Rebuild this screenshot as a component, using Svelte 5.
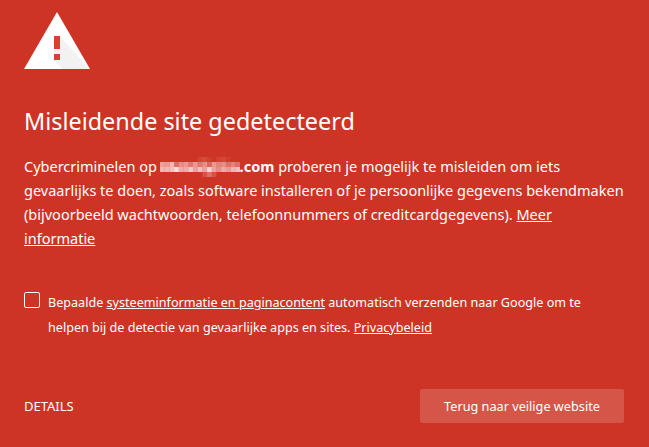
<script>
  // mosaic over the masked domain name, one row of opacities per 5px block
  const mosaic = [
    [0, 0, 0, 0, 0, 0, 0, 0, 0.08, 0.12, 0.06, 0, 0.08, 0.1, 0.04, 0, 0],
    [0.55, 0.5, 0.65, 0.3, 0.45, 0.5, 0.35, 0.5, 0.35, 0.45, 0.25, 0.5, 0.4, 0.45, 0.3, 0.4, 0.3],
    [0.65, 0.65, 0.7, 0.85, 0.6, 0.6, 0.75, 0.55, 0.7, 0.55, 0.8, 0.55, 0.45, 0.6, 0.5, 0.65, 0.7],
    [0, 0, 0, 0, 0, 0, 0, 0, 0, 0.15, 0.3, 0.15, 0, 0, 0, 0, 0],
  ];
</script>

<main>
  <svg class="icon" width="66" height="58" viewBox="0 0 66 58">
    <polygon points="33,0 66,57 0,57" fill="#fff" />
    <polygon points="60,57 38,57 30,49 30,24 36,24 59,50 64,57" fill="#000" opacity="0.05" />
    <rect x="30" y="24" width="6" height="13" fill="#d93f32" />
    <rect x="30" y="42" width="6" height="6" fill="#d93f32" />
  </svg>

  <h1>Misleidende site gedetecteerd</h1>

  <p class="intro">
    Cybercriminelen op
    <svg class="mask" width="80" height="20" viewBox="0 0 85 20" preserveAspectRatio="none">
      {#each mosaic as row, y}
        {#each row as o, x}
          <rect x={x * 5} y={y * 5} width="5" height="5" fill="#fff" opacity={o} />
        {/each}
      {/each}
    </svg><strong>.com</strong> proberen je mogelijk te misleiden om iets
    gevaarlijks te doen, zoals software installeren of je persoonlijke gegevens bekendmaken
    (bijvoorbeeld wachtwoorden, telefoonnummers of creditcardgegevens). <a href="#meer">Meer informatie</a>
  </p>

  <label class="optin">
    <span class="box"></span>
    <span class="optin-text">
      Bepaalde <a href="#info">systeeminformatie en paginacontent</a> automatisch verzenden naar Google om te
      helpen bij de detectie van gevaarlijke apps en sites. <a href="#privacy">Privacybeleid</a>
    </span>
  </label>

  <footer>
    <button class="details">DETAILS</button>
    <button class="back">Terug naar veilige website</button>
  </footer>
</main>

<style>
  :global(body) {
    background: #ce3426;
  }

  main {
    height: 447px;
    box-sizing: border-box;
    padding: 12px 25px 0 24px;
    display: flex;
    flex-direction: column;
    color: #fff;
    font-family: "Noto Sans", "Open Sans", sans-serif;
    overflow: hidden;
  }

  .icon {
    display: block;
    flex: none;
  }

  h1 {
    margin: 36px 0 0;
    font-size: 23.4px;
    line-height: 30px;
    font-weight: 400;
  }

  .intro {
    margin: 18px 0 0;
    font-size: 14.5px;
    line-height: 24px;
  }

  .mask {
    vertical-align: -5px;
    margin-left: -1px;
  }

  a {
    color: #fff;
    text-decoration: underline;
  }

  .optin {
    display: flex;
    gap: 8px;
    margin-top: 40px;
    font-size: 12.6px;
    line-height: 25px;
  }

  .optin-text {
    max-width: 545px;
  }

  .box {
    flex: none;
    box-sizing: border-box;
    width: 16px;
    height: 16px;
    margin-top: 2px;
    border: 1px solid #fff;
    border-radius: 2px;
  }

  footer {
    margin-top: auto;
    margin-bottom: 24px;
    display: flex;
    justify-content: space-between;
    align-items: center;
  }

  button {
    font-family: inherit;
    color: #fff;
    border: none;
    background: none;
    cursor: pointer;
  }

  .details {
    padding: 0;
    font-size: 13px;
  }

  .back {
    width: 204px;
    height: 34px;
    font-size: 12.7px;
    border-radius: 2px;
    background: #d65549;
  }
</style>
